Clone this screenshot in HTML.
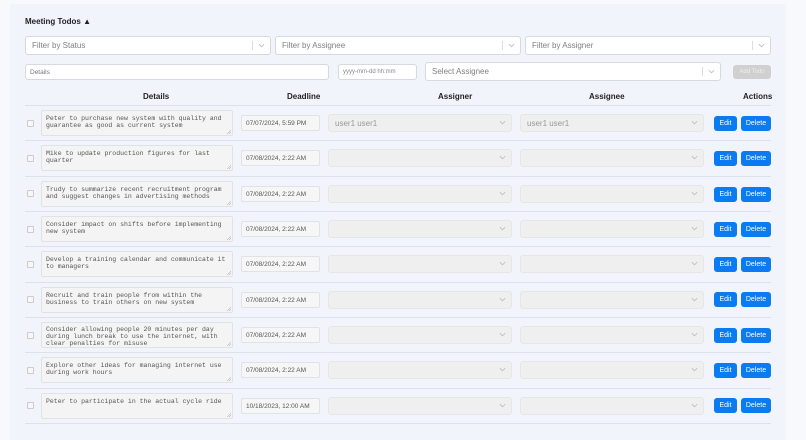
<!DOCTYPE html>
<html><head><meta charset="utf-8"><style>
*{box-sizing:border-box;margin:0;padding:0}
body{width:806px;height:440px;background:#f7f9fc;font-family:"Liberation Sans",sans-serif;position:relative;overflow:hidden}
.card{position:absolute;left:10px;top:4px;width:776px;height:436px;background:#f1f5fb}
.a{position:absolute}
.sel{position:absolute;background:#fff;border:1px solid #d6d9de;border-radius:3px;font-size:8px;color:#808080;padding-left:6px;display:flex;align-items:center}
.sel .sep{position:absolute;right:17px;top:4px;bottom:4px;width:1px;background:#ddd}
.sel .ch{position:absolute;right:5px;top:50%;margin-top:-4px;width:7px;height:7px}
.dis{background:#efefef;border-color:#e6e6e6;color:#999}
.ta{position:absolute;left:41px;width:192px;height:26px;background:#f4f4f4;border:1px solid #e0e2e5;border-radius:2px;font-family:"Liberation Mono",monospace;font-size:6.5px;line-height:7.3px;color:#555;padding:4px 0 0 4px;white-space:pre}
.ta:after{content:"";position:absolute;right:1px;bottom:1px;width:4px;height:4px;background:linear-gradient(135deg,transparent 45%,#aaa 50%,transparent 60%,transparent 70%,#aaa 75%,transparent 85%)}
.dt{position:absolute;left:241px;width:79px;height:16px;background:#f6f6f6;border:1px solid #e0e2e5;border-radius:2px;font-size:6.5px;color:#555;padding-left:4px;line-height:15px}
.cb{position:absolute;left:27px;width:7px;height:7px;border:1px solid #ccc;border-radius:1px;background:#f7f7f7}
.btn{position:absolute;height:15px;background:#0a7bf0;color:#fff;font-size:7px;border-radius:3px;text-align:center;line-height:15px}
.hr{position:absolute;left:25px;width:746px;height:1px;background:#dde2ea}
.th{position:absolute;top:92px;font-size:8px;font-weight:bold;color:#222}
</style></head><body>
<div class="card"></div>
<div class="a" style="left:25px;top:17px;font-size:8px;font-weight:bold;color:#222">Meeting Todos ▲</div>

<svg width="0" height="0" style="position:absolute"><defs><symbol id="c" viewBox="0 0 8 8"><path d="M1 2.5L4 5.5L7 2.5" fill="none" stroke="#bbb" stroke-width="0.9"/></symbol></defs></svg>

<div class="sel" style="left:25px;top:36px;width:246px;height:19px">Filter by Status<span class="sep"></span><svg class="ch"><use href="#c"/></svg></div>
<div class="sel" style="left:275px;top:36px;width:246px;height:19px">Filter by Assignee<span class="sep"></span><svg class="ch"><use href="#c"/></svg></div>
<div class="sel" style="left:525px;top:36px;width:246px;height:19px">Filter by Assigner<span class="sep"></span><svg class="ch"><use href="#c"/></svg></div>

<div class="sel" style="left:25px;top:64px;width:304px;height:16px;font-size:6.5px;color:#777;padding-left:4px">Details</div>
<div class="sel" style="left:338px;top:64px;width:79px;height:16px;font-size:6px;color:#888;padding-left:4px">yyyy-mm-dd hh:mm</div>
<div class="sel" style="left:425px;top:62px;width:296px;height:19px">Select Assignee<span class="sep"></span><svg class="ch"><use href="#c"/></svg></div>
<div class="btn" style="left:733px;top:65px;width:38px;height:14px;line-height:14px;background:#d0d0d0;color:#eee;font-size:6px">Add Todo</div>

<div class="th" style="left:143px">Details</div>
<div class="th" style="left:287px">Deadline</div>
<div class="th" style="left:438px">Assigner</div>
<div class="th" style="left:589px">Assignee</div>
<div class="th" style="left:743px">Actions</div>
<div class="hr" style="top:105px"></div>

<div class="cb" style="top:120px"></div><div class="ta" style="top:110px">Peter to purchase new system with quality and
guarantee as good as current system</div><div class="dt" style="top:115px">07/07/2024, 5:59 PM</div>
<div class="sel dis" style="left:328px;top:114px;width:184px;height:18px">user1 user1<svg class="ch"><use href="#c"/></svg></div>
<div class="sel dis" style="left:520px;top:114px;width:184px;height:18px">user1 user1<svg class="ch"><use href="#c"/></svg></div>
<div class="btn" style="left:714px;top:116px;width:23px">Edit</div><div class="btn" style="left:741px;top:116px;width:30px">Delete</div>
<div class="hr" style="top:140px"></div>

<div class="cb" style="top:155px"></div><div class="ta" style="top:145px">Mike to update production figures for last
quarter</div><div class="dt" style="top:150px">07/08/2024, 2:22 AM</div>
<div class="sel dis" style="left:328px;top:149px;width:184px;height:18px"><svg class="ch"><use href="#c"/></svg></div>
<div class="sel dis" style="left:520px;top:149px;width:184px;height:18px"><svg class="ch"><use href="#c"/></svg></div>
<div class="btn" style="left:714px;top:151px;width:23px">Edit</div><div class="btn" style="left:741px;top:151px;width:30px">Delete</div>
<div class="hr" style="top:176px"></div>

<div class="cb" style="top:190px"></div><div class="ta" style="top:181px">Trudy to summarize recent recruitment program
and suggest changes in advertising methods</div><div class="dt" style="top:186px">07/08/2024, 2:22 AM</div>
<div class="sel dis" style="left:328px;top:185px;width:184px;height:18px"><svg class="ch"><use href="#c"/></svg></div>
<div class="sel dis" style="left:520px;top:185px;width:184px;height:18px"><svg class="ch"><use href="#c"/></svg></div>
<div class="btn" style="left:714px;top:187px;width:23px">Edit</div><div class="btn" style="left:741px;top:187px;width:30px">Delete</div>
<div class="hr" style="top:211px"></div>

<div class="cb" style="top:226px"></div><div class="ta" style="top:216px">Consider impact on shifts before implementing
new system</div><div class="dt" style="top:221px">07/08/2024, 2:22 AM</div>
<div class="sel dis" style="left:328px;top:220px;width:184px;height:18px"><svg class="ch"><use href="#c"/></svg></div>
<div class="sel dis" style="left:520px;top:220px;width:184px;height:18px"><svg class="ch"><use href="#c"/></svg></div>
<div class="btn" style="left:714px;top:222px;width:23px">Edit</div><div class="btn" style="left:741px;top:222px;width:30px">Delete</div>
<div class="hr" style="top:246px"></div>

<div class="cb" style="top:261px"></div><div class="ta" style="top:251px">Develop a training calendar and communicate it
to managers</div><div class="dt" style="top:256px">07/08/2024, 2:22 AM</div>
<div class="sel dis" style="left:328px;top:255px;width:184px;height:18px"><svg class="ch"><use href="#c"/></svg></div>
<div class="sel dis" style="left:520px;top:255px;width:184px;height:18px"><svg class="ch"><use href="#c"/></svg></div>
<div class="btn" style="left:714px;top:257px;width:23px">Edit</div><div class="btn" style="left:741px;top:257px;width:30px">Delete</div>
<div class="hr" style="top:282px"></div>

<div class="cb" style="top:296px"></div><div class="ta" style="top:287px">Recruit and train people from within the
business to train others on new system</div><div class="dt" style="top:292px">07/08/2024, 2:22 AM</div>
<div class="sel dis" style="left:328px;top:291px;width:184px;height:18px"><svg class="ch"><use href="#c"/></svg></div>
<div class="sel dis" style="left:520px;top:291px;width:184px;height:18px"><svg class="ch"><use href="#c"/></svg></div>
<div class="btn" style="left:714px;top:292px;width:23px">Edit</div><div class="btn" style="left:741px;top:292px;width:30px">Delete</div>
<div class="hr" style="top:317px"></div>

<div class="cb" style="top:332px"></div><div class="ta" style="top:322px;padding-top:2.5px">Consider allowing people 20 minutes per day
during lunch break to use the internet, with
clear penalties for misuse</div><div class="dt" style="top:327px">07/08/2024, 2:22 AM</div>
<div class="sel dis" style="left:328px;top:326px;width:184px;height:18px"><svg class="ch"><use href="#c"/></svg></div>
<div class="sel dis" style="left:520px;top:326px;width:184px;height:18px"><svg class="ch"><use href="#c"/></svg></div>
<div class="btn" style="left:714px;top:328px;width:23px">Edit</div><div class="btn" style="left:741px;top:328px;width:30px">Delete</div>
<div class="hr" style="top:352px"></div>

<div class="cb" style="top:367px"></div><div class="ta" style="top:357px">Explore other ideas for managing internet use
during work hours</div><div class="dt" style="top:362px">07/08/2024, 2:22 AM</div>
<div class="sel dis" style="left:328px;top:361px;width:184px;height:18px"><svg class="ch"><use href="#c"/></svg></div>
<div class="sel dis" style="left:520px;top:361px;width:184px;height:18px"><svg class="ch"><use href="#c"/></svg></div>
<div class="btn" style="left:714px;top:363px;width:23px">Edit</div><div class="btn" style="left:741px;top:363px;width:30px">Delete</div>
<div class="hr" style="top:388px"></div>

<div class="cb" style="top:402px"></div><div class="ta" style="top:393px">Peter to participate in the actual cycle ride</div><div class="dt" style="top:398px">10/18/2023, 12:00 AM</div>
<div class="sel dis" style="left:328px;top:397px;width:184px;height:18px"><svg class="ch"><use href="#c"/></svg></div>
<div class="sel dis" style="left:520px;top:397px;width:184px;height:18px"><svg class="ch"><use href="#c"/></svg></div>
<div class="btn" style="left:714px;top:398px;width:23px">Edit</div><div class="btn" style="left:741px;top:398px;width:30px">Delete</div>
<div class="hr" style="top:423px"></div>
</body></html>
